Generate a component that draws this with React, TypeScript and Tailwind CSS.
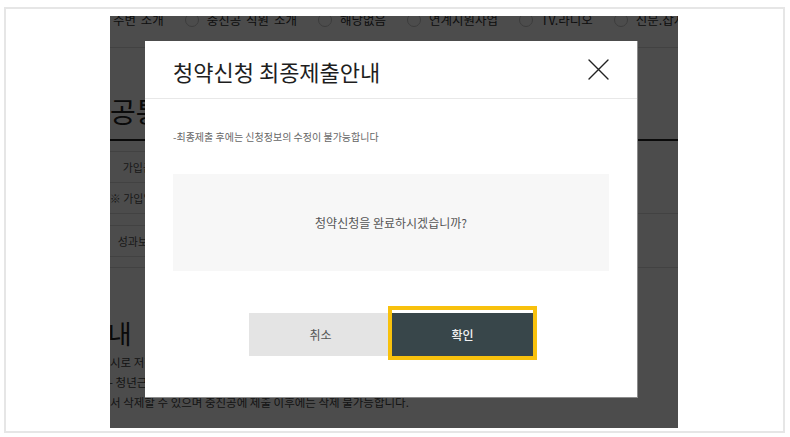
// options row that sits behind the dialog (only its lower half is visible)
const channels = ["주변 소개", "중진공 직원 소개", "해당없음", "연계지원사업", "TV.라디오", "신문.잡지"]

function Radio({ label }: { label: string }) {
  return (
    <label className="flex items-center gap-[8px] whitespace-nowrap">
      <span className="h-[14px] w-[14px] shrink-0 rounded-full border border-[#c8c8c8] bg-white" />
      <span>{label}</span>
    </label>
  )
}

function Label({ children }: { children: string }) {
  return <span className="whitespace-nowrap">{children}</span>
}

function BackgroundPage() {
  return (
    <div className="w-full text-[11px] text-[#333]">
      <div className="flex h-[32px] border-b border-[#dddddd]">
        <div className="-ml-[19px] -mt-[6px] flex h-[20px] items-center gap-[21px] text-[12.5px] [word-spacing:2px]">
          {channels.map((c) => (
            <Radio key={c} label={c} />
          ))}
        </div>
      </div>

      <h2 className="mt-[49px] h-[28px] whitespace-nowrap text-[28px] leading-[28px] text-[#222]">공통정보</h2>

      <div className="mt-[14px] border-t-2 border-[#222]">
        <div className="flex border-b border-[#dddddd]">
          <div className="w-[66px] pt-[10px] text-[#555]">
            <div className="flex h-[31px] items-center justify-center border-t border-[#dddddd]">
              <Label>가입금액</Label>
            </div>
            <div className="flex h-[31px] items-center justify-center border-t border-[#dddddd]">
              <Label>※ 가입일 기준</Label>
            </div>
          </div>
          <div className="flex-1" />
        </div>
        <div className="flex border-b border-[#dddddd]">
          <div className="w-[66px] pb-[10px] pt-[11px] text-[#555]">
            <div className="flex h-[32px] items-center justify-center border-y border-[#dddddd]">
              <Label>성과보고서</Label>
            </div>
          </div>
          <div className="flex-1" />
        </div>
      </div>

      <h2 className="-ml-[74px] mt-[52px] h-[26px] whitespace-nowrap text-[26px] leading-[26px] text-[#222]">작성안내</h2>

      <ul className="mt-[6px] text-[11.5px] leading-[20px] text-[#444]">
        <li className="whitespace-nowrap">시로 저장되며 최종제출 전까지는 언제든지 수정이 가능합니다.</li>
        <li className="-ml-[1px] whitespace-nowrap">- 청년근로자 정보는 임시저장 상태에서만 목록에</li>
        <li className="whitespace-nowrap">서 삭제할 수 있으며 중진공에 제출 이후에는 삭제 불가능합니다.</li>
      </ul>
    </div>
  )
}

function CloseIcon() {
  return (
    <svg width="21" height="21" viewBox="0 0 21 21" fill="none" stroke="currentColor" strokeWidth="1.4" strokeLinecap="round">
      <path d="M1 1L20 20M20 1L1 20" />
    </svg>
  )
}

function ConfirmDialog() {
  return (
    <div className="absolute left-[35px] top-[25px] flex h-[357px] w-[493px] flex-col border-b border-r border-[#8c8c8c] bg-white">
      <div className="flex h-[58px] items-center justify-between border-b border-[#e8e8e8] px-[28px]">
        <h1 className="pt-[4px] text-[22px] font-normal text-[#1e1e1e]">청약신청 최종제출안내</h1>
        <button className="text-[#222]" aria-label="닫기">
          <CloseIcon />
        </button>
      </div>

      <div className="px-[28px] pt-[30px]">
        <p className="text-[10px] leading-[15px] text-[#666]">-최종제출 후에는 신청정보의 수정이 불가능합니다</p>
        <div className="mt-[30px] flex h-[97px] items-center justify-center bg-[#f7f7f7]">
          <p className="text-[12px] text-[#555]">청약신청을 완료하시겠습니까?</p>
        </div>
      </div>

      <div className="mt-[35px] flex items-start pl-[104px]">
        <button className="mt-[7px] h-[43px] w-[143px] bg-[#e4e4e4] text-[12px] text-[#555]">취소</button>
        <div className="-ml-[4px] border-4 border-[#f8c10d] bg-white pt-[3px]">
          <button className="block h-[43px] w-[141px] bg-[#38464a] text-[12px] font-medium text-[#f2f2f2]">확인</button>
        </div>
      </div>
    </div>
  )
}

export default function App() {
  return (
    <div className="h-[437px] w-[790px] overflow-hidden bg-white pl-[4px] pt-[7px] font-['Noto_Sans_CJK_KR','Liberation_Sans',sans-serif]">
      <div className="h-[426px] w-[781px] border-2 border-[#e6e6e6] pl-[104px] pt-[7px]">
        <div className="relative h-[412px] w-[568px] overflow-hidden bg-white">
          <BackgroundPage />
          <div className="absolute inset-0 bg-black/70" />
          <ConfirmDialog />
        </div>
      </div>
    </div>
  )
}
